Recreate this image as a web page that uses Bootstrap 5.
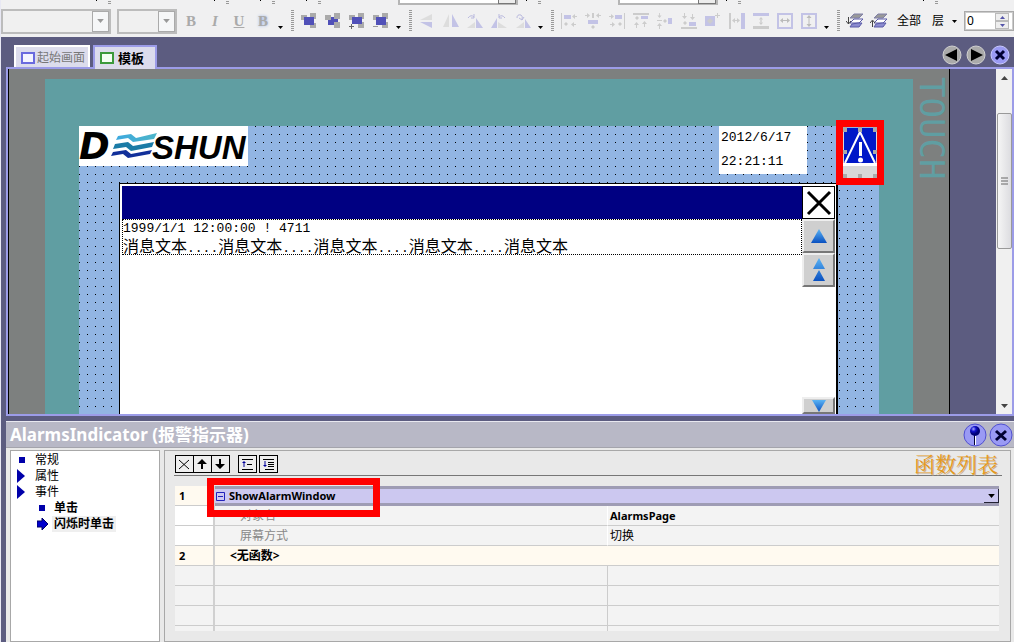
<!DOCTYPE html>
<html lang="zh-CN">
<head>
<meta charset="utf-8">
<meta name="viewport" content="width=device-width, initial-scale=1">
<title>模板</title>
<link href="https://cdn.jsdelivr.net/npm/bootstrap@5.3.0/dist/css/bootstrap.min.css" rel="stylesheet">
<style>
:root{--chrome:#5c5c80;--rim:#9c9ce8;--face:#f0f0f1;--navy:#000082}
body{font:12px/16px "Noto Sans","Noto Sans CJK SC",sans-serif;color:#000;background:var(--chrome)}
button{background:none;border:0;padding:0;color:inherit;line-height:1}
svg{display:block}
.app{border-left:1px solid #e8e8f4}
.bars{background:var(--face)}
.bar-top{height:5px}
.bar-top .tick{width:1px;height:1px;background:#000}
.bar-top .hold{width:3px;height:4px;background:repeating-linear-gradient(#f0f0f1 0 1px,#999 1px 2px);margin-left:11px}
.bar-top .field{height:5px;border:2px solid #b5b5b5;border-top:0;background:#fff}
.bar-top .field i{width:18px;height:4px;border:1px solid #777;border-top:0;background:#ececec}
.bar-main{height:32px}
.pick{appearance:none;height:25px;border:2px solid #bcbcbc;border-radius:0;background:#f0f0f0;color:#888;opacity:1}
.pickbox .drop{position:absolute;right:2px;top:2px;width:17px;height:21px;border:1px solid #aaa;background:#f6f7f8;pointer-events:none}
.tool{width:24px;height:24px;flex:none}
.tool.letter{font:bold 15px/24px "Liberation Serif",serif;color:#aaa}
.tool.glow{text-shadow:0 0 3px #9ab4e8}
.more{width:11px;height:24px;flex:none}
.hold-main{width:3px;height:22px;margin:0 3px 0 5px;flex:none;background:repeating-linear-gradient(#999 0 1px,#f0f0f1 1px 2px)}
.spin{width:50px;height:20px;border:1px solid #aaa;outline:1px solid #ccc;outline-offset:-2px;background:#fff}
.spin input{width:28px;border:0;padding:0 0 0 2px;font:12px/16px "Noto Sans",sans-serif;background:none}
.spin button{width:14px;height:8px;border:1px solid #bbb;background:#eee}
.tabs{height:32px}
.tabbtn{height:24px;border:2px solid #fff;border-bottom:0;background:#dcdcec;padding:0 5px;font-size:12px}
.tabbtn.plain{color:#777;padding:0 3px 0 5px}
.tabbtn.plain svg{margin-right:2px}
.tabbtn.current{border-color:var(--rim);font-weight:700;font-size:13px;padding-right:11px;z-index:1}
.round{width:20px;height:20px}
.editor{margin:-2px 0 0 5px;border:2px solid var(--rim);flex:1 1 0;min-height:0}
.device{background:#7d807f;border:solid #000;border-width:0 1px;padding:10px 36px 0}
.touch{position:absolute;right:0;top:8px;writing-mode:vertical-rl;font:34px/34px "DejaVu Sans Mono",monospace;color:#609ea2}
.teal{background:#609ea2;padding:47px 34px 0}
.canvas{background-color:#000;background-image:linear-gradient(90deg,transparent 1px,#92b5e3 1px),linear-gradient(transparent 1px,#92b5e3 1px);background-size:8px 8px}
.logo{background:#fff;width:169px;height:40px}
.clock{background:#fff;width:88px;height:48px;margin-right:72px;padding-left:2px;font:13px/24px "Liberation Mono",monospace}
.ind{position:absolute;right:-5px;top:-6px;width:48px;height:65px;border:7px solid #f00;background:#92b5e3}
.almwin{margin:9px 41px 0 40px;border:solid #000;border-width:1px 2px 0 1px;background:#fff;padding:2px 0 0 2px}
.caption{height:33px;background:var(--navy)}
.msg{border:1px dotted #000;height:36px;font:13px/16px "Liberation Mono",monospace;padding-top:1px}
.msg .han{font:16px/16px "Noto Sans CJK SC",sans-serif}
.msg .dots{font:13px/16px "Liberation Mono",monospace}
.side{width:34px;flex:none}
.key{height:34px;width:33px;background:#cfcfcf;border:2px solid;border-color:#eee #777 #777 #eee;flex:none}
.key.shut{height:33px;background:#fff;border:1px solid #000;outline:1px solid #000;outline-offset:-1px}
.gutter{width:46px;flex:none}
.sbar{width:16px;flex:none;background:#f0f0f0;padding:7px 0 6px}
.thumb{height:136px;margin:33px 0 auto 1px;border:1px solid #999;border-radius:2px;background:linear-gradient(90deg,#f5f5f5,#dcdce0)}
.panel{margin:5px 0 0 5px;flex:0 0 221px;background:#e9e9e9;border-top:1px solid #e8e8f0;min-height:0}
.phead{height:26px;background:#b8b8c6;border-bottom:1px solid #a4a4ac;color:#fff;padding-left:4px}
.phead h1{font:bold 17px/24px "Noto Sans","Noto Sans CJK SC",sans-serif;margin:0}
.pbody{padding:2px 3px 0 4px;gap:4px}
.tree{width:150px;flex:none;background:#fff;border:1px solid #a8a8a8;padding:1px 0 0 6px}
.tree li{height:16px}
.tree svg{margin-right:9px}
.tree .sub{padding-left:20px;font-weight:700}
.tree .sub svg{margin-right:4px}
.tree .on{background:#efefef;padding:0 2px}
.work{border:1px solid #a8a8a8;padding:2px 8px 10px 9px}
.wbar{height:23px;border-bottom:1px solid #777;padding:2px 4px 0 1px}
.sq{width:19px;height:18px;border:1px solid #000;background:#eee;margin-left:-1px}
.sq:first-child{margin-left:0}
.wtitle{font:400 21px/16px "Noto Serif CJK SC","Noto Sans CJK SC",serif;color:#e69a1c;text-shadow:1px 1px 0 #c8b090;margin:0}
.gridwrap{margin:10px 3px 0 1px;min-height:0}
.fn{width:100%;table-layout:fixed;border-collapse:separate;border-spacing:0;background:#f3f3f3;line-height:14px}
.fn td,.fn th{height:20px;padding:0;border-bottom:1px solid #ccc;font-weight:400;white-space:nowrap}
.fn th{border-right:2px solid #d0d0d0;padding-left:4px;font-weight:700;font-size:11px}
.fn .cream>*{background:#fffaf0}
.fn .w th{background:#fff}
.fn .name{padding-left:25px;color:#888}
.fn .val{border-left:1px solid #fff;padding-left:2px}
.fn .e .val{border-left-color:#ccc}
.fn .none{padding-left:15px;font-weight:700}
.fn .sel{background:#ccc8f0;border:solid #9e9cb4;border-width:3px 0;line-height:12px}
.fn .b11{font-weight:700;font-size:11px}
.pull{width:15px;height:14px;border:solid #223;border-width:0 1px 1px 0}
.mark-box{position:absolute;left:32px;top:-8px;width:173px;height:39px;border:7px solid #f00;pointer-events:none}
</style>
</head>
<body>
<svg width="0" height="0" class="position-absolute">
<defs>
<symbol id="dn" viewBox="0 0 5 3"><path d="M0 0h5L2.500 3z"/></symbol>
<symbol id="la" viewBox="0 0 5 5"><path d="M0 2.500L3 0v2h2v1H3v2z"/></symbol>
<symbol id="ra" viewBox="0 0 5 5"><path d="M5 2.500L2 0v2H0v1h2v2z"/></symbol>
<symbol id="ua" viewBox="0 0 5 6"><path d="M2.500 0L5 3H3v3H2V3H0z"/></symbol>
<symbol id="da" viewBox="0 0 5 6"><path d="M2.500 6L5 3H3V0H2v3H0z"/></symbol>
<linearGradient id="gb" x2="0" y2="1"><stop stop-color="#5ab4f5"/><stop offset="1" stop-color="#0a50c0"/></linearGradient>
<linearGradient id="w1"><stop stop-color="#3da9df"/><stop offset="1" stop-color="#4db5c8"/></linearGradient>
<radialGradient id="ball" cx=".35" cy=".3"><stop stop-color="#aaf"/><stop offset=".5" stop-color="#11c"/><stop offset="1" stop-color="#007"/></radialGradient>
<symbol id="lay" viewBox="0 0 18 16"><path d="M8 1h9l-4 4H4z" fill="#999" stroke="#8080a8"/><path d="M8 6h9l-4 4H4z" fill="#fff" stroke="#5a5aa8"/><path d="M12 10h4l-3 4H4l2-3z" fill="#8c8cd0" stroke="#5a5aa8"/></symbol>
</defs>
</svg>
<div class="app d-flex flex-column vh-100 overflow-hidden">
<header class="bars">
  <div class="bar-top d-flex overflow-hidden">
    <span class="tick" style="margin-left:95px"></span><span class="hold"></span>
    <span class="tick" style="margin-left:103px"></span><span class="hold"></span>
    <span class="tick" style="margin-left:31px"></span><span class="hold"></span>
    <span class="tick" style="margin-left:31px"></span><span class="hold"></span>
    <span class="field d-flex justify-content-end" style="margin-left:77px;width:120px"><i></i></span>
    <span class="tick" style="margin-left:8px"></span><span class="hold"></span>
    <span class="field d-flex justify-content-end" style="margin-left:77px;width:100px"><i></i></span>
    <span class="tick" style="margin-left:8px"></span><span class="hold"></span>
    <span class="tick" style="margin-left:182px"></span><span class="hold"></span>
  </div>
  <div class="bar-main d-flex align-items-center">
    <div class="pickbox position-relative" style="width:110px"><select class="pick w-100" aria-label="字体" disabled><option></option></select><span class="drop d-flex align-items-center justify-content-center"><svg width="7" height="4" fill="#999"><use href="#dn"/></svg></span></div>
    <div class="pickbox position-relative ms-1" style="width:62px;padding-left:2px"><select class="pick w-100" aria-label="字号" disabled><option></option></select><span class="drop d-flex align-items-center justify-content-center"><svg width="7" height="4" fill="#999"><use href="#dn"/></svg></span></div>
    <div class="d-flex" style="margin-left:2px">
      <button class="tool letter">B</button><button class="tool letter fst-italic">I</button><button class="tool letter text-decoration-underline">U</button><button class="tool letter glow">B</button>
    </div>
    <button class="more d-flex align-items-end justify-content-center" aria-label="更多"><svg class="mb-1" width="5" height="3"><use href="#dn"/></svg></button><span class="hold-main"></span>
    <div class="d-flex">
      <button class="tool" aria-label="置前"><svg class="mx-auto" width="16" height="16"><path d="M0 2h6v5H0zM9 0h6v6H9zM9 10h6v5H9z" fill="#aaa"/><path d="M3 4h10v8H3z" fill="#5050b8"/></svg></button>
      <button class="tool" aria-label="置后"><svg class="mx-auto" width="16" height="16"><path d="M3 4h8v8H3z" fill="#5050b8"/><path d="M0 2h6v5H0zM9 0h6v6H9zM9 9h6v6H9z" fill="#aaa"/><path d="M6 5h3v4H6zM9 6h4v3H9z" fill="#5050b8"/></svg></button>
      <button class="tool" aria-label="前移"><svg class="mx-auto" width="16" height="16"><path d="M0 2h6v5H0zM9 0h6v6H9zM9 9h6v6H9z" fill="#aaa"/><path d="M3 4h10v7H3z" fill="#5050b8"/><path d="M0 13.500h5M2.500 11v5" stroke="#666"/></svg></button>
      <button class="tool" aria-label="后移"><svg class="mx-auto" width="16" height="16"><path d="M0 2h6v5H0zM9 0h6v6H9zM9 9h6v6H9z" fill="#aaa"/><path d="M3 4h10v8H3z" fill="#5050b8"/><path d="M0 13.500h5" stroke="#999"/></svg></button>
    </div>
    <button class="more d-flex align-items-end justify-content-center" aria-label="更多"><svg class="mb-1" width="5" height="3"><use href="#dn"/></svg></button><span class="hold-main"></span>
    <div class="d-flex">
      <button class="tool" aria-label="垂直翻转"><svg class="mx-auto" width="16" height="16"><path d="M13 1v6H1z" fill="#ddd"/><path d="M1 9h12v6z" fill="#c3c3e6"/></svg></button>
      <button class="tool" aria-label="水平翻转"><svg class="mx-auto" width="16" height="16"><path d="M6 1v13H0z" fill="#ddd"/><path d="M9 1v13h7z" fill="#c3c3e6"/></svg></button>
      <button class="tool" aria-label="左转"><svg class="mx-auto" width="16" height="16"><path d="M8 9v6H0z" fill="#ddd"/><path d="M9 5v10h7z" fill="#c3c3e6"/><path d="M1 5q3-4 6-1M7 1v4H4" fill="none" stroke="#b9b9de"/></svg></button>
      <button class="tool" aria-label="右转"><svg class="mx-auto" width="16" height="16"><path d="M7 9v6h9z" fill="#ddd"/><path d="M6 5v10H0z" fill="#c3c3e6"/><path d="M14 5q-3-4-6-1M8 1v4h3" fill="none" stroke="#b9b9de"/></svg></button>
      <button class="tool" aria-label="旋转"><svg class="mx-auto" width="16" height="16"><path d="M9 9v6H1z" fill="#ddd"/><path d="M10 6v9h6z" fill="#c3c3e6"/><path d="M2 5q0-4 4-3 2 1 1 5M4 5l3 2 2-3" fill="none" stroke="#b9b9de"/></svg></button>
    </div>
    <button class="more d-flex align-items-end justify-content-center" aria-label="更多"><svg class="mb-1" width="5" height="3"><use href="#dn"/></svg></button><span class="hold-main"></span>
    <div class="d-flex">
      <button class="tool" aria-label="左对齐"><svg class="mx-auto" width="16" height="16" fill="#ccc"><path d="M0 0h1v16H0z"/><path d="M3 2h7v4H3z" fill="#c3c3e6"/><path d="M3 11l2-2 2 2-2 2z"/><use href="#la" x="11" y="1" width="5" height="5"/><use href="#la" x="10" y="9" width="5" height="5"/></svg></button>
      <button class="tool" aria-label="居中"><svg class="mx-auto" width="16" height="16" fill="#ccc"><path d="M7 0h2v5H7zM8 12l2 2-2 2-2-2z"/><path d="M3 7h10v4H3z" fill="#c3c3e6"/><use href="#ra" x="0" width="5" height="5"/><use href="#la" x="11" width="5" height="5"/></svg></button>
      <button class="tool" aria-label="右对齐"><svg class="mx-auto" width="16" height="16" fill="#ccc"><path d="M15 0h1v16h-1z"/><path d="M6 2h7v4H6z" fill="#c3c3e6"/><path d="M9 11l2-2 2 2-2 2z"/><use href="#ra" x="0" y="1" width="5" height="5"/><use href="#ra" x="1" y="9" width="5" height="5"/></svg></button>
      <button class="tool" aria-label="顶对齐"><svg class="mx-auto" width="16" height="16" fill="#ccc"><path d="M0 0h16v2H0z"/><path d="M8 3h7v3H8z" fill="#c3c3e6"/><path d="M4 3l2 2-2 2-2-2z"/><use href="#ua" x="1" y="9" width="5" height="6"/><use href="#ua" x="9" y="8" width="5" height="6"/></svg></button>
      <button class="tool" aria-label="垂直居中"><svg class="mx-auto" width="16" height="16" fill="#ccc"><path d="M0 7h5v1H0zM8 6l2 2-2 2-2-2z"/><path d="M11 5h4v6h-4z" fill="#c3c3e6"/><use href="#da" y="0" width="5" height="5"/><use href="#ua" y="10" width="5" height="6"/></svg></button>
      <button class="tool" aria-label="底对齐"><svg class="mx-auto" width="16" height="16" fill="#ccc"><path d="M0 14h16v2H0zM4 8l2 2-2 2-2-2z"/><path d="M8 9h7v4H8z" fill="#c3c3e6"/><use href="#da" x="1" width="5" height="6"/><use href="#da" x="9" y="1" width="5" height="6"/></svg></button>
      <button class="tool" aria-label="画面居中"><svg class="mx-auto" width="16" height="16"><path d="M0 3h10v10H0z" fill="#c3c3e6"/><path d="M5 5l3 3-3 3-3-3z" fill="#ccc"/><path d="M12.500 0v5M10 2.500h5" stroke="#ccc"/></svg></button>
      <button class="tool" aria-label="水平间距"><svg class="mx-auto" width="16" height="16" fill="#ccc"><path d="M0 0h2v16H0z"/><path d="M12 0h4v16h-4z" fill="#c3c3e6"/><use href="#la" x="3" y="5" width="5" height="5"/><use href="#ra" x="6" y="5" width="5" height="5"/></svg></button>
      <button class="tool" aria-label="垂直间距"><svg class="mx-auto" width="16" height="16" fill="#ccc"><path d="M0 13h16v3H0z"/><path d="M0 0h16v3H0z" fill="#c3c3e6"/><use href="#ua" x="5" y="4" width="6" height="5"/><use href="#da" x="5" y="7" width="6" height="5"/></svg></button>
      <button class="tool" aria-label="等宽"><svg class="mx-auto" width="16" height="16" fill="#bbb"><path d="M1 1h14v14H1z" fill="none" stroke="#c3c3e6" stroke-width="2"/><use href="#la" x="3" y="5" width="5" height="5"/><use href="#ra" x="8" y="5" width="5" height="5"/></svg></button>
      <button class="tool" aria-label="等高"><svg class="mx-auto" width="16" height="16" fill="#bbb"><path d="M1 1h14v14H1z" fill="none" stroke="#c3c3e6" stroke-width="2"/><use href="#ua" x="5" y="2" width="6" height="6"/><use href="#da" x="5" y="8" width="6" height="6"/></svg></button>
    </div>
    <button class="more d-flex align-items-end justify-content-center" aria-label="更多"><svg class="mb-1" width="5" height="3"><use href="#dn"/></svg></button><span class="hold-main"></span>
    <div class="d-flex">
      <button class="tool" aria-label="下移一层"><svg class="mx-auto" width="18" height="16"><use href="#lay" width="18" height="16"/><path d="M2.500 4v7M0 8l2.500 3L5 8" stroke="#444" fill="none"/></svg></button>
      <button class="tool" aria-label="上移一层"><svg class="mx-auto" width="18" height="16"><use href="#lay" width="18" height="16"/><path d="M2.500 14V8M0 10l2.500-3L5 10" stroke="#444" fill="none"/></svg></button>
    </div>
    <button style="margin-left:6px">全部</button>
    <button class="d-flex align-items-center gap-2" style="margin-left:11px">层<svg width="5" height="3"><use href="#dn"/></svg></button>
    <div class="spin d-flex ms-auto"><input aria-label="层" value="0"><span class="d-flex flex-column justify-content-center ms-auto pe-1"><button class="d-flex align-items-center justify-content-center" aria-label="增"><svg width="5" height="3" viewBox="0 0 5 3" fill="#55a"><path d="M0 3h5L2.500 0z"/></svg></button><button class="d-flex align-items-center justify-content-center" aria-label="减"><svg width="5" height="3" fill="#55a"><use href="#dn"/></svg></button></span></div>
  </div>
</header>
<nav class="tabs d-flex align-items-end ps-2 flex-shrink-0">
  <button class="tabbtn plain d-flex align-items-center" style="margin-left:5px"><svg width="14" height="12"><path d="M1 1h12v10H1z" fill="#f4f4ff" stroke="#6a6ade" stroke-width="2"/></svg>起始画面</button>
  <button class="tabbtn current d-flex align-items-center position-relative" style="margin-left:3px"><svg class="me-1" width="14" height="12"><path d="M1 1h12v10H1z" fill="#f4fff4" stroke="#3c9a3c" stroke-width="2"/></svg>模板</button>
  <div class="ms-auto d-flex align-self-start gap-1 pe-1 pt-2">
    <button class="round" aria-label="前一页"><svg width="20" height="20"><circle cx="10" cy="10" r="9" fill="#aaa" stroke="#d0d0d0"/><path d="M3 10l12-6v12z"/></svg></button>
    <button class="round" aria-label="后一页"><svg width="20" height="20"><circle cx="10" cy="10" r="9" fill="#aaa" stroke="#d0d0d0"/><path d="M17 10L5 4v12z"/></svg></button>
    <button class="round" aria-label="关闭"><svg width="20" height="20"><circle cx="10" cy="10" r="9" fill="#9a9af4" stroke="#c8c8ff"/><path d="M6 6l8 8M14 6l-8 8" stroke="#003" stroke-width="3"/></svg></button>
  </div>
</nav>
<main class="editor d-flex">
  <div class="device flex-grow-1 position-relative d-flex">
    <span class="touch">TOUCH</span>
    <div class="teal flex-grow-1 d-flex">
      <div class="canvas flex-grow-1 position-relative d-flex flex-column overflow-visible">
        <div class="d-flex justify-content-between">
          <svg class="logo" viewBox="0 0 169 40" role="img" aria-label="Deeshun"><text x="0" y="33" font-family="DejaVu Sans" font-weight="700" font-style="italic" font-size="37">D</text><text x="73" y="33" font-family="Liberation Sans" font-weight="700" font-style="italic" font-size="33">SHUN</text><path d="M39 10l13-2 5 4 21-5-3 6-21 3-5-4-12 2z" fill="url(#w1)"/><path d="M36 18l13-2 5 4 21-4-2 5-21 4-5-4-13 2z" fill="#1b7ba6"/><path d="M34 26l13-2 5 4 21-4-2 4-22 4-5-4-12 2z" fill="#12309a"/></svg>
          <div class="clock">2012/6/17<br>22:21:11</div>
        </div>
        <div class="almwin flex-grow-1 d-flex">
          <div class="flex-grow-1"><div class="caption"></div><div class="msg"><div>1999/1/1 12:00:00 ! 4711</div><div class="han">消息文本<span class="dots">....</span>消息文本<span class="dots">....</span>消息文本<span class="dots">....</span>消息文本<span class="dots">....</span>消息文本</div></div></div>
          <div class="side d-flex flex-column">
            <button class="key shut" aria-label="关闭"><svg class="mx-auto" width="26" height="26"><path d="M2 2l22 22M24 2L2 24" stroke="#000" stroke-width="3"/></svg></button>
            <button class="key" aria-label="向上"><svg class="mx-auto" width="16" height="14"><path d="M8 0l8 14H0z" fill="url(#gb)"/></svg></button>
            <button class="key" aria-label="向上翻页"><svg class="mx-auto" width="14" height="24"><path d="M7 0l6 11H1zM7 12l6 11H1z" fill="url(#gb)"/></svg></button>
            <button class="key mt-auto" style="height:17px" aria-label="向下"><svg class="mx-auto" width="14" height="12"><path d="M0 0h14L7 12z" fill="url(#gb)"/></svg></button>
          </div>
        </div>
        <div class="ind"><svg width="34" height="51"><path d="M0 1h34v51H0z" fill="#d8d8d8"/><path d="M1 1h32v38H1z" fill="#0018c8"/><path d="M0 36h34v3H0z" fill="#fff"/><path d="M17 5L2 36M17 5l15 31" stroke="#fff" stroke-width="2"/><path d="M16 15h3v14h-3z" fill="#fff"/><circle cx="17.500" cy="33" r="2.500" fill="#fff"/><path d="M0 0h4v5H0zM15 0h4v5h-4zM30 0h4v5h-4zM0 23h4v4H0zM30 23h4v4h-4zM0 47h4v4H0zM15 47h4v4h-4zM30 47h4v4h-4z" fill="#aaa"/></svg></div>
      </div>
    </div>
  </div>
  <div class="gutter"></div>
  <div class="sbar d-flex flex-column">
    <svg class="mx-auto" width="7" height="4" viewBox="0 0 7 4"><path d="M0 4h7L3.500 0z" fill="#444"/></svg>
    <div class="thumb d-flex align-items-center justify-content-center"><svg width="7" height="8"><path d="M0 1h7M0 4h7M0 7h7" stroke="#666"/></svg></div>
    <svg class="mx-auto" width="7" height="4" viewBox="0 0 7 4"><path d="M0 0h7L3.500 4z" fill="#444"/></svg>
  </div>
</main>
<section class="panel d-flex flex-column">
  <div class="phead d-flex align-items-center flex-shrink-0"><h1>AlarmsIndicator (报警指示器)</h1>
    <button class="ms-auto" aria-label="固定"><svg width="24" height="24"><circle cx="12" cy="12" r="11" fill="#9a9af4" stroke="#5050d0"/><path d="M12.500 10v12" stroke="#fff"/><path d="M11.500 10v12" stroke="#003"/><circle cx="12" cy="8" r="5" fill="url(#ball)"/></svg></button>
    <button style="margin:0 1px 0 2px" aria-label="关闭"><svg width="24" height="24"><circle cx="12" cy="12" r="11" fill="#9a9af4" stroke="#5050d0"/><path d="M7 8l10 9M17 8L7 17" stroke="#003" stroke-width="3"/></svg></button>
  </div>
  <div class="pbody d-flex flex-grow-1 overflow-hidden">
    <ul class="tree list-unstyled mb-0">
      <li class="d-flex align-items-center"><svg width="9" height="8"><path d="M2 1h6v6H2z" fill="#00a"/></svg>常规</li>
      <li class="d-flex align-items-center"><svg width="9" height="14"><path d="M0 0l8 7-8 7z" fill="#00a"/></svg>属性</li>
      <li class="d-flex align-items-center"><svg width="9" height="14"><path d="M0 0l8 7-8 7z" fill="#00a"/></svg>事件</li>
      <li class="sub d-flex align-items-center"><svg width="11" height="8"><path d="M2 1h6v6H2z" fill="#00a"/></svg><span class="on bg-white">单击</span></li>
      <li class="sub d-flex align-items-center"><svg width="11" height="12"><path d="M0 3h5V0l6 6-6 6V9H0z" fill="#00c" stroke="#006"/></svg><span class="on">闪烁时单击</span></li>
    </ul>
    <div class="work flex-grow-1 d-flex flex-column">
      <div class="wbar d-flex flex-shrink-0">
        <button class="sq" aria-label="删除"><svg width="16" height="16"><path d="M3 4l10 9M13 4L3 13" stroke="#000"/></svg></button>
        <button class="sq" aria-label="上移"><svg width="16" height="16"><path d="M8 3l5 5H9v5H7V8H3z"/></svg></button>
        <button class="sq" aria-label="下移"><svg width="16" height="16"><path d="M8 13l5-5H9V3H7v5H3z"/></svg></button>
        <button class="sq ms-2" aria-label="折叠"><svg width="16" height="16"><path d="M3 3.500h11M3 13.500h11M8 8.500h5" stroke="#000"/><path d="M5 5l2 2H3zM4.500 7h1v4h-1z" fill="#009"/></svg></button>
        <button class="sq" style="margin-left:2px" aria-label="展开"><svg width="16" height="16"><path d="M3 3.500h11M8 6.500h6M8 8.500h6M8 10.500h6M5 13.500h9" stroke="#000"/><path d="M5 11L3 9h4zM4.500 5h1v4h-1z" fill="#009"/></svg></button>
        <h2 class="wtitle ms-auto">函数列表</h2>
      </div>
      <div class="gridwrap position-relative flex-grow-1">
        <div class="overflow-hidden h-100">
        <table class="fn">
          <colgroup><col style="width:40px"><col><col></colgroup>
          <tbody>
          <tr class="cream"><th>1</th><td colspan="2" class="sel b11"><div class="d-flex align-items-center"><svg class="me-1" width="10" height="10"><path d="M1.500 1.500h8v8h-8zM3 5.500h5" fill="none" stroke="#22b"/></svg>ShowAlarmWindow<button class="pull d-flex align-items-center justify-content-center ms-auto" aria-label="选择函数"><svg width="7" height="4"><use href="#dn"/></svg></button></div></td></tr>
          <tr class="w"><th></th><td class="name">对象名</td><td class="val b11">AlarmsPage</td></tr>
          <tr class="w"><th></th><td class="name">屏幕方式</td><td class="val">切换</td></tr>
          <tr class="cream"><th>2</th><td colspan="2" class="none">&lt;无函数&gt;</td></tr>
          <tr class="e"><th></th><td></td><td class="val"></td></tr>
          <tr class="e"><th></th><td></td><td class="val"></td></tr>
          <tr class="e"><th></th><td></td><td class="val"></td></tr>
          <tr class="e"><th></th><td></td><td class="val"></td></tr>
          </tbody>
        </table>
        </div>
        <span class="mark-box"></span>
      </div>
    </div>
  </div>
</section>
</div>
<script src="https://cdn.jsdelivr.net/npm/bootstrap@5.3.0/dist/js/bootstrap.bundle.min.js"></script>
</body>
</html>
